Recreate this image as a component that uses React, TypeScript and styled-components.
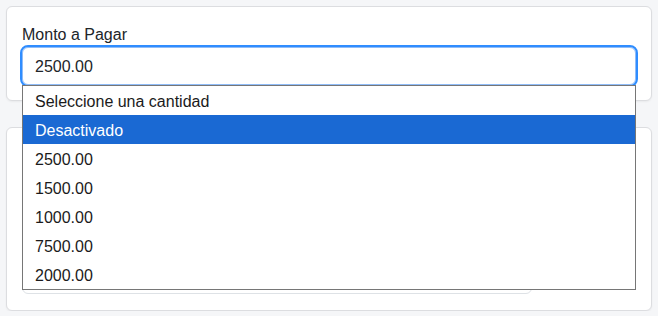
import React from "react";
import styled, { createGlobalStyle } from "styled-components";

const GlobalStyle = createGlobalStyle`
  html, body {
    margin: 0;
    padding: 0;
    background: #f5f6f8;
  }
  body {
    font-family: "Liberation Sans", Arial, sans-serif;
    font-size: 16px;
    color: #212529;
  }
`;

const Page = styled.div`
  padding: 6px 6px 0 6px;
  display: flex;
  flex-direction: column;
  gap: 26px;
`;

const Card = styled.section`
  background: #ffffff;
  border: 1px solid #dcdde0;
  border-radius: 6px;
  padding: 15px;
  box-shadow: 0 1px 2px rgba(0, 0, 0, 0.05);
`;

const Label = styled.label`
  display: block;
  line-height: 24px;
  padding-top: 1px;
  font-size: 16px;
  color: #212529;
`;

const SelectWrap = styled.div`
  position: relative;
`;

const SelectBox = styled.div`
  box-sizing: border-box;
  height: 38px;
  padding: 7px 12px 5px;
  line-height: 24px;
  border: 1px solid #8fbcf8;
  border-radius: 6px;
  outline: 2px solid #2f8dff;
  outline-offset: 0;
  background: #fff;
  color: #212529;
`;

const Popup = styled.ul`
  position: absolute;
  top: 38px;
  left: 0;
  right: 0;
  margin: 0;
  padding: 0;
  list-style: none;
  background: #fff;
  border: 1px solid #767676;
  z-index: 10;
`;

const Option = styled.li<{ $active?: boolean }>`
  box-sizing: border-box;
  height: 29px;
  line-height: 27px;
  padding: 2px 0 0 12px;
  font-size: 16px;
  color: ${(p) => (p.$active ? "#ffffff" : "#1b1b1b")};
  background: ${(p) => (p.$active ? "#1a69d3" : "transparent")};
`;

const Body2 = styled.div`
  height: 152px;
  display: flex;
  flex-direction: column;
  justify-content: flex-end;
`;

const InnerBox = styled.div`
  box-sizing: border-box;
  width: 510px;
  height: 120px;
  margin-bottom: 1px;
  border: 1px solid #dee2e6;
  border-radius: 6px;
  background: #fff;
`;

const options = [
  "Seleccione una cantidad",
  "Desactivado",
  "2500.00",
  "1500.00",
  "1000.00",
  "7500.00",
  "2000.00",
];

export default function App() {
  return (
    <>
      <GlobalStyle />
      <Page>
        <Card>
          <Label>Monto a Pagar</Label>
          <SelectWrap>
            <SelectBox>2500.00</SelectBox>
            <Popup>
              {options.map((o) => (
                <Option key={o} $active={o === "Desactivado"}>
                  {o}
                </Option>
              ))}
            </Popup>
          </SelectWrap>
        </Card>
        <Card>
          <Body2>
            <InnerBox />
          </Body2>
        </Card>
      </Page>
    </>
  );
}
